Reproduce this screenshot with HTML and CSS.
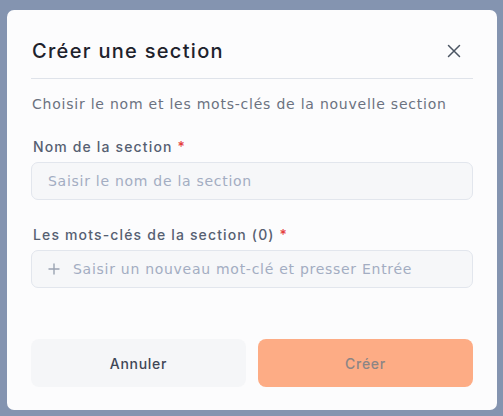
FILE: index.html
```html
<!DOCTYPE html>
<html lang="fr">
<head>
<meta charset="utf-8">
<title>Créer une section</title>
<link rel="stylesheet" href="styles.css">
</head>
<body>
<div class="dialog">
  <div class="header">
    <h2 class="title">Créer une section</h2>
    <button class="close" aria-label="Fermer">
      <svg width="14" height="14" viewBox="0 0 14 14"><path d="M1.5 1.5 L12.5 12.5 M12.5 1.5 L1.5 12.5" stroke="#4b5563" stroke-width="1.5" stroke-linecap="round" fill="none"/></svg>
    </button>
  </div>
  <p class="subtitle">Choisir le nom et les mots-clés de la nouvelle section</p>
  <div class="field first">
    <label class="label">Nom de la section <span class="req">*</span></label>
    <div class="input"><span class="ph">Saisir le nom de la section</span></div>
  </div>
  <div class="field">
    <label class="label">Les mots-clés de la section (0) <span class="req">*</span></label>
    <div class="input tags">
      <svg class="plus" width="12" height="12" viewBox="0 0 12 12"><path d="M6 1 V11 M1 6 H11" stroke="#9aa3b2" stroke-width="1.4" stroke-linecap="round" fill="none"/></svg>
      <span class="ph">Saisir un nouveau mot-clé et presser Entrée</span>
    </div>
  </div>
  <div class="actions">
    <button class="btn cancel">Annuler</button>
    <button class="btn create">Créer</button>
  </div>
</div>
</body>
</html>
```
FILE: styles.css
```css
* { box-sizing: border-box; }
html, body { margin: 0; padding: 0; }
body {
  background: #8494b0;
  font-family: "DejaVu Sans", sans-serif;
  width: 503px;
  height: 416px;
  overflow: hidden;
}
.dialog {
  margin: 10px 0 0 7px;
  width: 490px;
  height: 400px;
  background: #fcfcfd;
  border-radius: 7px;
  padding: 0 24px 23px 24px;
  display: flex;
  flex-direction: column;
}
.header {
  display: flex;
  align-items: center;
  justify-content: space-between;
  padding: 26px 0 12px 1px;
  border-bottom: 1px solid #dfe3ea;
}
.title {
  margin: 0;
  font-family: "Inter", sans-serif;
  font-size: 20px;
  line-height: 30px;
  font-weight: 500;
  color: #1e222c;
  letter-spacing: 1.3px;
}
.close {
  border: 0;
  background: none;
  padding: 0;
  margin-right: 12px;
  width: 14px;
  height: 14px;
  display: flex;
}
.subtitle {
  margin: 15px 0 0 1px;
  font-size: 14px;
  line-height: 20px;
  color: #6b7280;
  letter-spacing: 0.77px;
}
.field { display: flex; flex-direction: column; gap: 5px; margin-top: 25px; }
.field.first { margin-top: 23px; }
.label {
  font-family: "Inter", sans-serif;
  font-size: 14px;
  line-height: 20px;
  font-weight: 500;
  color: #566072;
  padding-left: 2px;
  letter-spacing: 1.15px;
}
.req { color: #e53e3e; }
.input {
  height: 38px;
  border: 1px solid #e2e6ed;
  background: #f6f7f9;
  border-radius: 7px;
  display: flex;
  align-items: center;
  padding: 0 16px;
  gap: 13px;
}
.ph {
  font-size: 14px;
  color: #a3adc2;
  letter-spacing: 0.72px;
}
.plus { flex: none; }
.actions {
  margin-top: auto;
  display: grid;
  grid-template-columns: 1fr 1fr;
  gap: 12px;
}
.btn {
  height: 48px;
  border: 0;
  border-radius: 8px;
  font-family: "Inter", sans-serif;
  font-size: 14px;
  font-weight: 500;
  letter-spacing: 0.7px;
}
.cancel { background: #f5f6f8; color: #3f4656; }
.create { background: #fdac85; color: #8b8585; }
```
